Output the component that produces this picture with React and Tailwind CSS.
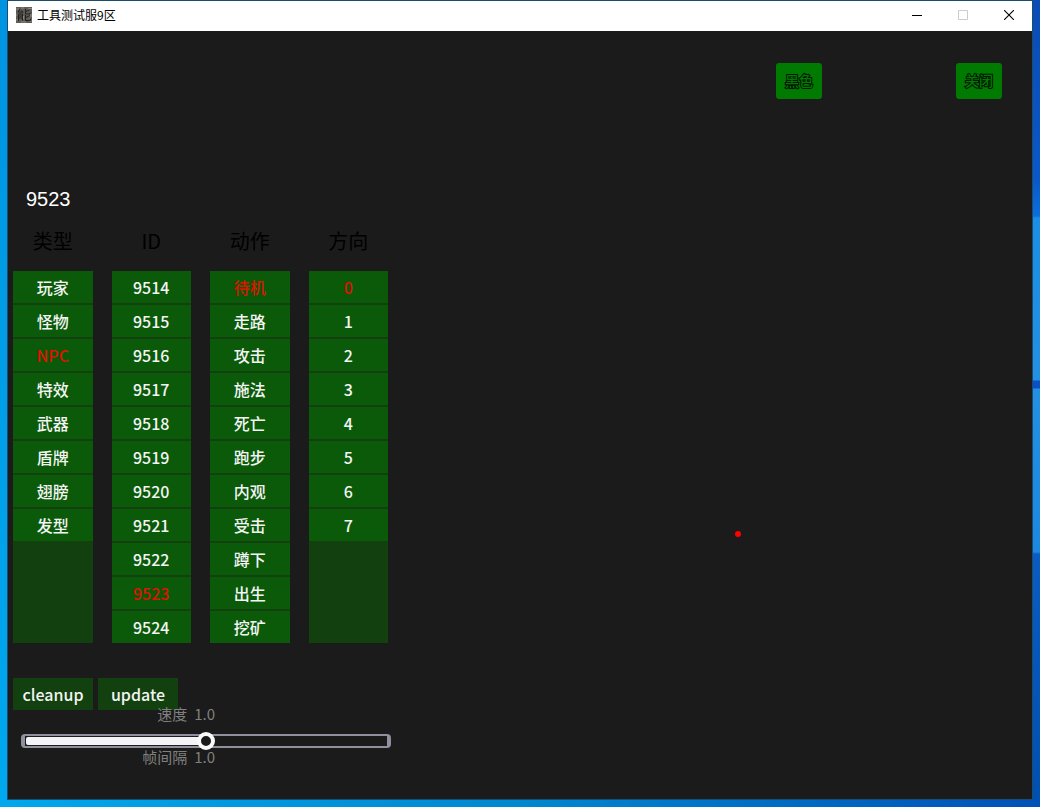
import { useState } from "react";

const cell =
  "flex h-8 w-full items-center justify-center bg-[#0a5a0a] pb-px text-base leading-6 font-medium cursor-pointer";

const lists = [
  {
    key: "type",
    title: "类型",
    items: ["玩家", "怪物", "NPC", "特效", "武器", "盾牌", "翅膀", "发型"],
  },
  {
    key: "id",
    title: "ID",
    items: [
      "9514",
      "9515",
      "9516",
      "9517",
      "9518",
      "9519",
      "9520",
      "9521",
      "9522",
      "9523",
      "9524",
    ],
  },
  {
    key: "action",
    title: "动作",
    items: [
      "待机",
      "走路",
      "攻击",
      "施法",
      "死亡",
      "跑步",
      "内观",
      "受击",
      "蹲下",
      "出生",
      "挖矿",
    ],
  },
  {
    key: "dir",
    title: "方向",
    items: ["0", "1", "2", "3", "4", "5", "6", "7"],
  },
];

function AppIcon() {
  return (
    <svg viewBox="0 0 16 16" className="h-4 w-4" aria-hidden="true">
      <rect width="16" height="16" fill="#5f5c57" />
      <path
        d="M0 2h3M5 1h3M12 1.500h4M0 13h2M13 14h3M0 8h1.500M15 7v3M5 15h5M7.500 9v3"
        stroke="#8d8981"
        strokeWidth="1.2"
      />
      <path
        d="M4 2l-2 3h5M5.500 3.500l1.500 2M2.500 7v7M2.500 7h4v6.500M3 9h3M3 11h3M9.500 2v5h4.500V5.500M9.500 4.500l4-1.500M9.500 8v5.500h5V12M10 10.500l4-2"
        fill="none"
        stroke="#22201e"
        strokeWidth="1"
      />
    </svg>
  );
}

function TitleBar() {
  return (
    <header className="flex h-[30px] items-center justify-between bg-white pb-0.5 text-black">
      <div className="flex items-center gap-[5px] pl-2">
        <AppIcon />
        <h1 className="text-xs leading-4">工具测试服9区</h1>
      </div>
      <div className="flex h-full">
        <button
          type="button"
          aria-label="最小化"
          className="flex w-[46px] items-center justify-center"
        >
          <svg viewBox="0 0 10 10" className="h-2.5 w-2.5">
            <path d="M0 5.5h10" stroke="#000" />
          </svg>
        </button>
        <button
          type="button"
          aria-label="最大化"
          disabled
          className="flex w-[46px] items-center justify-center"
        >
          <svg viewBox="0 0 10 10" className="h-2.5 w-2.5">
            <path d="M.5.5h9v9h-9z" fill="none" stroke="#ccc" />
          </svg>
        </button>
        <button
          type="button"
          aria-label="关闭窗口"
          className="flex w-[46px] items-center justify-center"
        >
          <svg viewBox="0 0 10 10" className="h-2.5 w-2.5">
            <path d="M0 0l10 10M10 0L0 10" stroke="#000" strokeWidth="1.1" />
          </svg>
        </button>
      </div>
    </header>
  );
}

function ToolButton({ children }) {
  return (
    <button
      type="button"
      className="h-9 w-[46px] rounded-[3px] bg-[#007a00] pb-0.5 text-sm leading-6 font-medium text-[#007a00] [-webkit-text-stroke:2px_#001400] [paint-order:stroke_fill]"
    >
      {children}
    </button>
  );
}

function PickList({ title, items, value, onPick }) {
  return (
    <section>
      <h2 className="mb-3 text-center text-xl leading-9 text-black">{title}</h2>
      <ul className="flex min-h-[372px] flex-col gap-0.5 bg-[#12400f]">
        {items.map((item) => (
          <li key={item}>
            <button
              type="button"
              onClick={() => onPick(item)}
              className={
                item === value
                  ? `${cell} text-[#dc1400]`
                  : `${cell} text-[#f4f4f4]`
              }
            >
              {item}
            </button>
          </li>
        ))}
      </ul>
    </section>
  );
}

export default function App() {
  const [picked, setPicked] = useState({
    type: "NPC",
    id: "9523",
    action: "待机",
    dir: "0",
  });
  const [speed, setSpeed] = useState(1);
  const [interval, setFrameInterval] = useState(1);

  const cleanup = () => {
    setSpeed(1);
    setFrameInterval(1);
  };

  const fill = (speed / 2) * 100;

  return (
    <div className="flex min-h-screen flex-col bg-linear-to-r from-[#00a8ee] via-[#0088d0] to-[#0050b8] font-['Noto_Sans_CJK_SC','Noto_Sans',sans-serif]">
      <div className="flex flex-1">
        <div className="w-[7px] bg-linear-to-b from-[#0094e0] to-[#00a8ee]" />
        <div className="flex flex-1 flex-col border border-[#1c4c70] bg-[#1b1b1b]">
          <TitleBar />
          <main className="relative flex-1 pb-4">
            <div className="flex justify-end gap-[134px] pt-8 pr-[30px]">
              <ToolButton>黑色</ToolButton>
              <ToolButton>关闭</ToolButton>
            </div>

            <p className="mt-[88px] pl-[18px] font-['Liberation_Sans',sans-serif] text-xl leading-6 text-white">
              {picked.id}
            </p>

            <div className="mt-3 ml-[5px] grid w-[375px] grid-cols-4 gap-[19px]">
              {lists.map((list) => (
                <PickList
                  key={list.key}
                  title={list.title}
                  items={list.items}
                  value={picked[list.key]}
                  onPick={(v) => setPicked({ ...picked, [list.key]: v })}
                />
              ))}
            </div>

            <div className="mt-[35px] ml-[5px] flex gap-[5px] text-base leading-6 font-medium text-[#f4f4f4]">
              <button
                type="button"
                onClick={cleanup}
                className="h-8 w-20 bg-[#12400f] pb-px"
              >
                cleanup
              </button>
              <button type="button" className="h-8 w-20 bg-[#12400f] pb-px">
                update
              </button>
            </div>

            <div className="ml-[13px] w-[370px] text-[15px] leading-6 text-[#808080]">
              <label
                htmlFor="speed"
                className="-mt-2 flex h-6 w-[194px] justify-end gap-[7px]"
              >
                <span>速度</span>
                <span>{speed.toFixed(1)}</span>
              </label>
              <input
                id="speed"
                type="range"
                min="0"
                max="2"
                step="0.1"
                value={speed}
                onChange={(e) => setSpeed(Number(e.target.value))}
                style={{ "--fill": `${fill}%` }}
                className="mt-2 block h-3.5 w-full appearance-none rounded-sm border-x-4 border-y-2 border-[#8f8f9d] bg-[#1b1b1b] p-px [&::-webkit-slider-runnable-track]:h-2 [&::-webkit-slider-runnable-track]:rounded-xs [&::-webkit-slider-runnable-track]:bg-[linear-gradient(to_right,#f4f4f8_var(--fill),transparent_var(--fill))] [&::-webkit-slider-thumb]:-mt-[5px] [&::-webkit-slider-thumb]:h-[18px] [&::-webkit-slider-thumb]:w-[18px] [&::-webkit-slider-thumb]:appearance-none [&::-webkit-slider-thumb]:rounded-full [&::-webkit-slider-thumb]:border-4 [&::-webkit-slider-thumb]:border-[#fafafa] [&::-webkit-slider-thumb]:bg-[#1b1b1b]"
              />
              <p className="-mt-[3px] flex w-[194px] justify-end gap-[7px]">
                <span>帧间隔</span>
                <span>{interval.toFixed(1)}</span>
              </p>
            </div>

            {/* sprite anchor on the preview stage */}
            <span className="absolute top-[500px] left-[727px] h-1.5 w-1.5 rounded-full bg-[#f00]" />
          </main>
        </div>
        <div className="w-[7px] bg-[linear-gradient(to_bottom,#0a4cb4_0,#0a58c8_180px,#0a70dc_216px,#1c8ee4_218px,#2490e0_380px,#0a50c4_381px,#0a50c4_388px,#2490e0_389px,#1c88e0_552px,#0a5cc0_554px,#0050b0_800px)]" />
      </div>
      <div className="h-[7px] shrink-0" />
    </div>
  );
}
